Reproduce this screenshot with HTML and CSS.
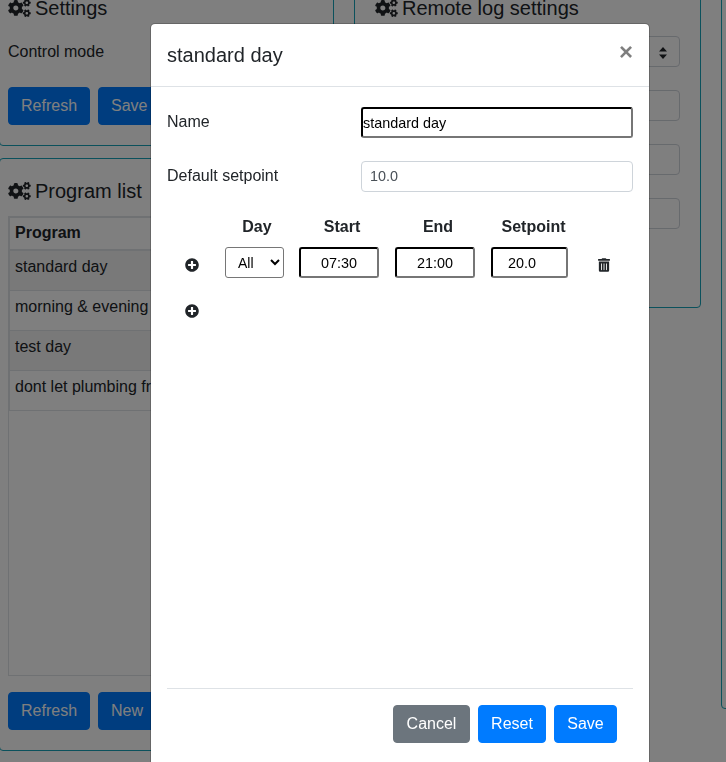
FILE: index.html
```html
<!DOCTYPE html>
<html lang="en">

<head>
    <meta charset="UTF-8">
    <meta name="viewport" content="width=device-width, initial-scale=1.0">
    <title>Thermostat programs</title>
    <link rel="stylesheet" href="styles.css">
</head>

<body>
    <svg class="icon-defs" aria-hidden="true">
        <symbol id="cogs" viewBox="0 0 640 512">
            <path d="M512.1 191l-8.2 14.3c-3 5.3-9.4 7.5-15.1 5.4-11.8-4.4-22.6-10.7-32.1-18.6-4.6-3.8-5.8-10.5-2.8-15.7l8.2-14.3c-6.9-8-12.3-17.3-15.9-27.4h-16.5c-6 0-11.2-4.3-12.2-10.3-2-12-2.1-24.6 0-37.1 1-6 6.2-10.4 12.2-10.4h16.5c3.6-10.1 9-19.4 15.9-27.4l-8.2-14.3c-3-5.2-1.9-11.9 2.8-15.7 9.5-7.9 20.4-14.2 32.1-18.6 5.7-2.1 12.1.1 15.1 5.4l8.2 14.3c10.5-1.9 21.2-1.9 31.7 0L552 6.3c3-5.3 9.4-7.5 15.1-5.4 11.8 4.4 22.6 10.7 32.1 18.6 4.6 3.8 5.8 10.5 2.8 15.7l-8.2 14.3c6.9 8 12.3 17.3 15.9 27.4h16.5c6 0 11.2 4.3 12.2 10.3 2 12 2.1 24.6 0 37.1-1 6-6.2 10.4-12.2 10.4h-16.5c-3.6 10.1-9 19.4-15.9 27.4l8.2 14.3c3 5.2 1.9 11.9-2.8 15.7-9.5 7.9-20.4 14.2-32.1 18.6-5.7 2.1-12.1-.1-15.1-5.4l-8.2-14.3c-10.4 1.9-21.2 1.9-31.7 0zm-10.5-58.8c38.5 29.6 82.4-14.3 52.8-52.8-38.5-29.7-82.4 14.3-52.8 52.8zM386.3 286.1l33.7 16.8c10.1 5.8 14.5 18.1 10.5 29.1-8.9 24.2-26.4 46.4-42.6 65.8-7.4 8.9-20.2 11.1-30.3 5.3l-29.1-16.8c-16 13.7-34.6 24.6-54.9 31.7v33.6c0 11.6-8.3 21.6-19.7 23.6-24.6 4.2-50.4 4.4-75.9 0-11.5-2-20-11.9-20-23.6V418c-20.3-7.2-38.9-18-54.9-31.7L74 403c-10 5.8-22.9 3.6-30.3-5.3-16.2-19.4-33.3-41.6-42.2-65.7-4-10.9.4-23.2 10.5-29.1l33.3-16.8c-3.9-20.9-3.9-42.4 0-63.4L12 205.8c-10.1-5.8-14.6-18.1-10.5-29 8.9-24.2 26-46.4 42.2-65.8 7.4-8.9 20.2-11.1 30.3-5.3l29.1 16.8c16-13.7 34.6-24.6 54.9-31.7V57.1c0-11.5 8.2-21.5 19.6-23.5 24.6-4.2 50.5-4.4 76-.1 11.5 2 20 11.9 20 23.6v33.6c20.3 7.2 38.9 18 54.9 31.7l29.1-16.8c10-5.8 22.9-3.6 30.3 5.3 16.2 19.4 33.2 41.6 42.1 65.8 4 10.9.1 23.2-10 29.1l-33.7 16.8c3.9 21 3.9 42.5 0 63.5zm-117.6 21.1c59.2-77-28.7-164.9-105.7-105.7-59.2 77 28.7 164.9 105.7 105.7zm243.4 182.7l-8.2 14.3c-3 5.3-9.4 7.5-15.1 5.4-11.8-4.4-22.6-10.7-32.1-18.6-4.6-3.8-5.8-10.5-2.8-15.7l8.2-14.3c-6.9-8-12.3-17.3-15.9-27.4h-16.5c-6 0-11.2-4.3-12.2-10.3-2-12-2.1-24.6 0-37.1 1-6 6.2-10.4 12.2-10.4h16.5c3.6-10.1 9-19.4 15.9-27.4l-8.2-14.3c-3-5.2-1.9-11.9 2.8-15.7 9.5-7.9 20.4-14.2 32.1-18.6 5.7-2.1 12.1.1 15.1 5.4l8.2 14.3c10.5-1.9 21.2-1.9 31.7 0l8.2-14.3c3-5.3 9.4-7.5 15.1-5.4 11.8 4.4 22.6 10.7 32.1 18.6 4.6 3.8 5.8 10.5 2.8 15.7l-8.2 14.3c6.9 8 12.3 17.3 15.9 27.4h16.5c6 0 11.2 4.3 12.2 10.3 2 12 2.1 24.6 0 37.1-1 6-6.2 10.4-12.2 10.4h-16.5c-3.6 10.1-9 19.4-15.9 27.4l8.2 14.3c3 5.2 1.9 11.9-2.8 15.7-9.5 7.9-20.4 14.2-32.1 18.6-5.7 2.1-12.1-.1-15.1-5.4l-8.2-14.3c-10.4 1.9-21.2 1.9-31.7 0zM501.6 431c38.5 29.6 82.4-14.3 52.8-52.8-38.5-29.6-82.4 14.3-52.8 52.8z" />
        </symbol>
        <symbol id="plus-circle" viewBox="0 0 512 512">
            <path d="M256 8C119 8 8 119 8 256s111 248 248 248 248-111 248-248S393 8 256 8zm144 276c0 6.6-5.4 12-12 12h-92v92c0 6.6-5.4 12-12 12h-56c-6.6 0-12-5.4-12-12v-92h-92c-6.6 0-12-5.4-12-12v-56c0-6.6 5.4-12 12-12h92v-92c0-6.6 5.4-12 12-12h56c6.6 0 12 5.4 12 12v92h92c6.6 0 12 5.4 12 12v56z" />
        </symbol>
        <symbol id="trash" viewBox="0 0 448 512">
            <path d="M32 464a48 48 0 0 0 48 48h288a48 48 0 0 0 48-48V128H32zm272-256a16 16 0 0 1 32 0v224a16 16 0 0 1-32 0zm-96 0a16 16 0 0 1 32 0v224a16 16 0 0 1-32 0zm-96 0a16 16 0 0 1 32 0v224a16 16 0 0 1-32 0zM432 32H312l-9.4-18.7A24 24 0 0 0 281.1 0H166.8a23.72 23.72 0 0 0-21.4 13.3L136 32H16A16 16 0 0 0 0 48v32a16 16 0 0 0 16 16h416a16 16 0 0 0 16-16V48a16 16 0 0 0-16-16z" />
        </symbol>
    </svg>

    <!-- Page behind the dialog -->
    <div class="page">
        <div class="column">
            <section class="card card-settings">
                <h4 class="card-title"><svg class="cogs"><use href="#cogs" /></svg> Settings</h4>
                <div class="control-row">Control mode</div>
                <div class="button-row">
                    <button class="btn btn-primary">Refresh</button>
                    <button class="btn btn-primary">Save</button>
                </div>
            </section>

            <section class="card card-programs">
                <h4 class="card-title"><svg class="cogs"><use href="#cogs" /></svg> Program list</h4>
                <div class="program-box">
                    <table class="program-table">
                        <thead>
                            <tr><th>Program</th></tr>
                        </thead>
                        <tbody>
                            <tr><td>standard day</td></tr>
                            <tr><td>morning &amp; evening</td></tr>
                            <tr><td>test day</td></tr>
                            <tr><td>dont let plumbing freeze</td></tr>
                        </tbody>
                    </table>
                </div>
                <div class="button-row">
                    <button class="btn btn-primary">Refresh</button>
                    <button class="btn btn-primary">New</button>
                </div>
            </section>
        </div>

        <div class="column">
            <section class="card card-remote">
                <h4 class="card-title"><svg class="cogs"><use href="#cogs" /></svg> Remote log settings</h4>
                <div class="field field-select">
                    <svg class="sort" viewBox="0 0 8 12"><path d="M4 0l4 4.6H0zM4 12L0 7.400h8z" /></svg>
                </div>
                <div class="field"></div>
                <div class="field"></div>
                <div class="field"></div>
            </section>
        </div>

        <div class="column">
            <section class="card card-third"></section>
        </div>
    </div>

    <!-- Program editor dialog -->
    <div class="backdrop"></div>
    <div class="modal">
        <div class="modal-header">
            <h5 class="modal-title">standard day</h5>
            <button class="close">&times;</button>
        </div>
        <div class="modal-body">
            <div class="form-row">
                <label for="name">Name</label>
                <input id="name" class="plain-input name-input" value="standard day">
            </div>
            <div class="form-row">
                <label for="setpoint">Default setpoint</label>
                <input id="setpoint" class="form-control" value="10.0">
            </div>

            <table class="schedule">
                <thead>
                    <tr>
                        <th class="col-add"></th>
                        <th class="col-day">Day</th>
                        <th class="col-time">Start</th>
                        <th class="col-time">End</th>
                        <th class="col-setpoint">Setpoint</th>
                        <th class="col-delete"></th>
                    </tr>
                </thead>
                <tbody>
                    <tr>
                        <td class="cell-add"><svg class="icon"><use href="#plus-circle" /></svg></td>
                        <td>
                            <select class="day-select">
                                <option>All</option>
                                <option>Mon</option>
                                <option>Tue</option>
                            </select>
                        </td>
                        <td><input class="plain-input time-input" value="07:30"></td>
                        <td><input class="plain-input time-input" value="21:00"></td>
                        <td><input class="plain-input setpoint-input" type="number" step="0.5" value="20.0"></td>
                        <td class="cell-delete"><svg class="icon icon-trash"><use href="#trash" /></svg></td>
                    </tr>
                    <tr>
                        <td class="cell-add cell-new"><svg class="icon"><use href="#plus-circle" /></svg></td>
                        <td colspan="5"></td>
                    </tr>
                </tbody>
            </table>

            <div class="modal-footer">
                <button class="btn btn-secondary btn-cancel">Cancel</button>
                <button class="btn btn-primary btn-reset">Reset</button>
                <button class="btn btn-primary btn-save">Save</button>
            </div>
        </div>
    </div>
</body>

</html>
```

FILE: styles.css
```css
* {
    box-sizing: border-box;
}

body {
    margin: 0;
    height: 762px;
    overflow: hidden;
    font-family: "Liberation Sans", Arial, sans-serif;
    font-size: 16px;
    line-height: 24px;
    color: #212529;
    background-color: #fff;
}

.icon-defs {
    display: none;
}

/* Page behind the dialog */
.page {
    display: grid;
    grid-template-columns: 335px 347px 347px;
    column-gap: 20px;
    margin: -20px 0 0 -1px;
    width: 1100px;
}

.card {
    border: 1px solid #17a2b8;
    border-radius: 4px;
    padding: 15px 20px 20px 8px;
}

.card-title {
    display: flex;
    align-items: center;
    gap: 4px;
    margin: 0 0 16px;
    font-size: 20px;
    font-weight: 400;
    line-height: 24px;
}

.cogs {
    width: 23px;
    height: 18px;
    fill: currentColor;
}

.control-row {
    height: 31px;
    margin-bottom: 20px;
    line-height: 31px;
}

.button-row {
    display: flex;
    gap: 8px;
}

.card-programs {
    margin-top: 12px;
    padding-top: 20px;
}

.card-programs .card-title {
    margin-bottom: 13px;
}

.program-box {
    height: 460px;
    margin-bottom: 16px;
    border: 1px solid #dee2e6;
}

.program-table {
    width: 100%;
    border-collapse: collapse;
}

.program-table th {
    height: 32px;
    padding: 3px 5px;
    text-align: left;
    border: 1px solid #dee2e6;
    border-bottom-width: 2px;
    white-space: nowrap;
}

.program-table td {
    height: 40px;
    padding: 4px 5px 11px;
    border: 1px solid #dee2e6;
    white-space: nowrap;
}

.program-table tbody tr:nth-child(odd) {
    background-color: rgba(0, 0, 0, 0.05);
}

.card-remote {
    height: 328px;
    padding-left: 20px;
}

.card-remote .card-title {
    margin-bottom: 16px;
}

.field {
    position: relative;
    height: 31px;
    margin-bottom: 23px;
    border: 1px solid #ced4da;
    border-radius: 4px;
    background-color: #fff;
}

.sort {
    position: absolute;
    top: 10px;
    right: 12px;
    width: 8px;
    height: 12px;
    fill: #212529;
}

.card-third {
    height: 729px;
}

.btn {
    height: 38px;
    padding: 0 12px;
    border: 1px solid transparent;
    border-radius: 4px;
    font-family: inherit;
    font-size: 16px;
    color: #fff;
    cursor: pointer;
}

.btn-primary {
    background-color: #007bff;
    border-color: #007bff;
}

.btn-secondary {
    background-color: #6c757d;
    border-color: #6c757d;
}

.btn-cancel {
    width: 77px;
}

.btn-reset {
    width: 68px;
}

.btn-save {
    width: 63px;
}

/* Dialog */
.backdrop {
    position: fixed;
    top: 0;
    left: 0;
    right: 0;
    bottom: 0;
    background-color: rgba(0, 0, 0, 0.5);
}

.modal {
    position: fixed;
    top: 23px;
    left: 150px;
    width: 500px;
    height: 800px;
    background-color: #fff;
    border: 1px solid rgba(0, 0, 0, 0.2);
    border-radius: 5px;
    background-clip: padding-box;
}

.modal-header {
    display: flex;
    justify-content: space-between;
    height: 63px;
    padding: 16px;
    border-bottom: 1px solid #dee2e6;
}

.modal-title {
    margin: 0;
    font-size: 20px;
    font-weight: 400;
    line-height: 30px;
}

.close {
    height: 30px;
    margin-top: -3px;
    padding: 0;
    border: none;
    background: none;
    font-family: inherit;
    font-size: 24px;
    font-weight: 700;
    line-height: 30px;
    color: #000;
    opacity: 0.5;
    cursor: pointer;
}

.modal-body {
    padding: 20px 16px 0;
}

.form-row {
    display: grid;
    grid-template-columns: 194px 272px;
    align-items: center;
    margin-bottom: 23px;
}

.form-row label {
    margin-top: -1px;
}

.plain-input {
    height: 31px;
    font-family: inherit;
    font-size: 14.4px;
    color: #000;
    background-color: #fff;
    border: 2px inset #767676;
    border-radius: 3px;
    border-color: #222 #767676 #767676 #222;
}

.name-input {
    width: 272px;
    padding: 0;
}

.form-control {
    height: 31px;
    padding: 0 8px 2px;
    font-family: inherit;
    font-size: 14.4px;
    color: #495057;
    border: 1px solid #ced4da;
    border-radius: 4px;
}

/* Schedule rows */
.schedule {
    border-collapse: collapse;
    table-layout: fixed;
    width: 457px;
    margin-top: 1px;
}

.schedule th {
    height: 32px;
    padding: 0 10px 8px 0;
    text-align: center;
}

.schedule th.col-setpoint {
    padding-right: 8px;
}

.schedule td {
    padding: 0;
}

.col-add {
    width: 58px;
}

.col-day {
    width: 74px;
}

.col-time {
    width: 96px;
}

.col-setpoint {
    width: 93px;
}

.col-delete {
    width: 40px;
}

.cell-add {
    padding-right: 8px !important;
    text-align: center;
}

.cell-delete {
    text-align: center;
}

.cell-new {
    height: 62px;
    padding-bottom: 2px !important;
}

.icon {
    display: block;
    width: 14px;
    height: 14px;
    margin: 5px auto 0;
    fill: #212529;
}

.icon-trash {
    width: 12px;
}

.day-select {
    display: block;
    width: 59px;
    height: 31px;
    padding: 0 0 0 8px;
    font-family: inherit;
    font-size: 14px;
    color: #000;
    background-color: #fff;
    border: 1px solid #767676;
    border-radius: 3px;
}

.time-input {
    display: block;
    width: 80px;
    padding: 1px;
    text-align: center;
}

.setpoint-input {
    display: block;
    width: 77px;
    padding: 1px;
    text-align: center;
}

.modal-footer {
    display: flex;
    justify-content: flex-end;
    gap: 8px;
    margin-top: 348px;
    padding: 16px;
    border-top: 1px solid #dee2e6;
}
```
